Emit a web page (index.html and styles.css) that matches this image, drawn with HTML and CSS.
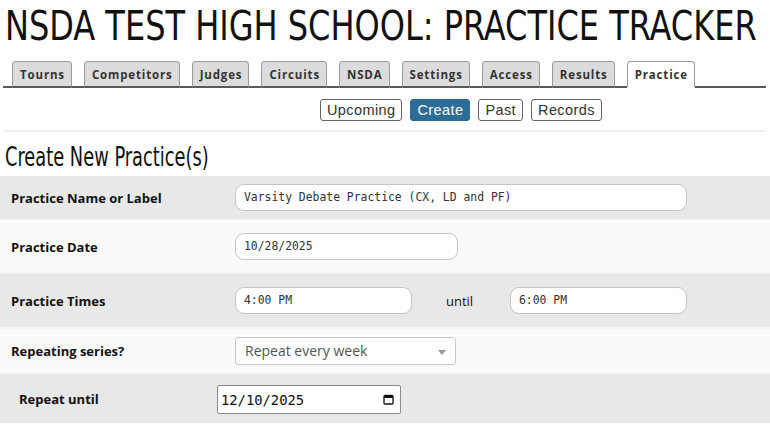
FILE: index.html
```html
<!DOCTYPE html>
<html lang="en">
<head>
<meta charset="utf-8">
<title>Practice Tracker</title>
<link rel="stylesheet" href="styles.css">
</head>
<body>
<h1 class="title"><span class="narrow">NSDA TEST HIGH SCHOOL: PRACTICE TRACKER</span></h1>
<nav class="tabs">
  <span class="tab">Tourns</span>
  <span class="tab">Competitors</span>
  <span class="tab">Judges</span>
  <span class="tab">Circuits</span>
  <span class="tab">NSDA</span>
  <span class="tab">Settings</span>
  <span class="tab">Access</span>
  <span class="tab">Results</span>
  <span class="tab active">Practice</span>
</nav>
<div class="subnav">
  <span class="btn">Upcoming</span>
  <span class="btn selected">Create</span>
  <span class="btn">Past</span>
  <span class="btn">Records</span>
</div>
<h2 class="heading"><span class="narrow-h">Create New Practice(s)</span></h2>
<div class="form">
  <div class="row odd r1">
    <span class="label">Practice Name or Label</span>
    <span class="field wide">Varsity Debate Practice (CX, LD and PF)</span>
  </div>
  <div class="row even r2">
    <span class="label">Practice Date</span>
    <span class="field mid">10/28/2025</span>
  </div>
  <div class="row odd r3">
    <span class="label">Practice Times</span>
    <span class="field short">4:00 PM</span>
    <span class="until">until</span>
    <span class="field short">6:00 PM</span>
  </div>
  <div class="row even r4">
    <span class="label">Repeating series?</span>
    <span class="select">Repeat every week<span class="arrow"></span></span>
  </div>
  <div class="row odd r5">
    <span class="label indent">Repeat until</span>
    <span class="date">12/10/2025
      <svg class="cal" width="11" height="11" viewBox="0 0 11 11"><rect x="1" y="1.5" width="9" height="8.5" rx="1" fill="none" stroke="#111" stroke-width="1.3"/><rect x="1" y="1.5" width="9" height="2.5" fill="#111"/></svg>
    </span>
  </div>
</div>
</body>
</html>
```
FILE: styles.css
```css
html, body {
  margin: 0;
  padding: 0;
  background: #fff;
}
body {
  width: 770px;
  height: 426px;
  overflow: hidden;
  font-family: "Open Sans", "DejaVu Sans", sans-serif;
  color: #111;
}
.title {
  margin: 0;
  padding: 2px 0 0 5px;
  height: 60px;
  box-sizing: border-box;
  overflow: hidden;
  font-family: "DejaVu Sans Condensed", "DejaVu Sans", sans-serif;
  font-weight: normal;
  font-size: 41px;
  line-height: 48px;
  color: #111;
  white-space: nowrap;
}
.narrow {
  display: inline-block;
  transform: scaleX(0.868);
  transform-origin: 0 0;
}
.tabs {
  display: flex;
  margin: 1px 4px 0 3px;
  padding-left: 9px;
  border-bottom: 2px solid #5a5a5a;
  gap: 12px;
  height: 25px;
}
.tab {
  box-sizing: border-box;
  height: 27px;
  margin-bottom: -2px;
  padding: 4px 6px 0 7px;
  background: #dcdcdc;
  border: 1px solid #9a9a9a;
  border-bottom: 2px solid #5a5a5a;
  border-radius: 4px 4px 0 0;
  font-size: 11.5px;
  font-weight: bold;
  letter-spacing: 0.85px;
  color: #333;
  line-height: 17px;
}
.tab.active {
  background: #fff;
  border-bottom-color: #fff;
  padding-left: 7px;
  padding-right: 6px;
}
.subnav {
  display: flex;
  gap: 8px;
  padding: 11px 0 9px 316px;
  margin: 0 4px;
  border-bottom: 2px solid #efefef;
}
.btn {
  box-sizing: border-box;
  height: 22px;
  padding: 0 6px;
  border: 1px solid #666;
  border-radius: 3px;
  font-family: "Liberation Sans", Arial, sans-serif;
  font-size: 14.5px;
  letter-spacing: 0.4px;
  line-height: 20px;
  color: #333;
  background: #fff;
}
.btn.selected {
  background: #2d6c96;
  border-color: #2d6c96;
  color: #fff;
}
.heading {
  margin: 0;
  padding: 11px 0 0 5px;
  height: 44px;
  box-sizing: border-box;
  overflow: hidden;
  font-family: "DejaVu Sans Condensed", "DejaVu Sans", sans-serif;
  font-weight: normal;
  font-size: 26px;
  line-height: 28px;
  color: #111;
  white-space: nowrap;
}
.narrow-h {
  display: inline-block;
  transform: scaleX(0.762);
  transform-origin: 0 0;
}
.form {
  display: flex;
  flex-direction: column;
}
.row {
  display: flex;
  align-items: center;
  box-sizing: border-box;
  border-bottom: 2px solid #f4f4f4;
}
.odd { background: #e8e8e8; }
.even { background: #fafafa; }
.r1 { height: 45px; }
.r2 { height: 53px; }
.r3 { height: 55px; }
.r4 { height: 45px; }
.r5 { height: 49px; border-bottom: 0; }
.label {
  box-sizing: border-box;
  width: 235px;
  padding-left: 11px;
  font-size: 13px;
  font-weight: bold;
  color: #111;
}
.label.indent {
  width: 217px;
  padding-left: 19px;
}
.field {
  box-sizing: border-box;
  height: 27px;
  padding-left: 8px;
  background: #fff;
  border: 1px solid #c4c4c4;
  border-radius: 9px;
  font-family: "DejaVu Sans Mono", monospace;
  font-size: 11.4px;
  line-height: 25px;
  color: #333;
  white-space: nowrap;
}
.field.wide { width: 452px; }
.field.mid { width: 223px; }
.field.short { width: 177px; }
.until {
  width: 98px;
  box-sizing: border-box;
  padding-left: 34px;
  font-size: 13px;
  color: #111;
}
.select {
  position: relative;
  box-sizing: border-box;
  width: 221px;
  height: 28px;
  padding-left: 9px;
  background: #fff;
  border: 1px solid #c8c8c8;
  border-radius: 3px;
  font-size: 14px;
  line-height: 25px;
  color: #555;
}
.arrow {
  position: absolute;
  right: 9px;
  top: 12px;
  width: 0;
  height: 0;
  border-left: 4px solid transparent;
  border-right: 4px solid transparent;
  border-top: 5px solid #999;
}
.date {
  display: flex;
  align-items: center;
  justify-content: space-between;
  box-sizing: border-box;
  width: 184px;
  height: 29px;
  margin-top: 2px;
  padding: 0 6px 0 3px;
  background: #fff;
  border: 1px solid #8a8a8a;
  border-radius: 2px;
  font-family: "DejaVu Sans Mono", monospace;
  font-size: 13.8px;
  color: #111;
}
.cal { display: block; }
```
